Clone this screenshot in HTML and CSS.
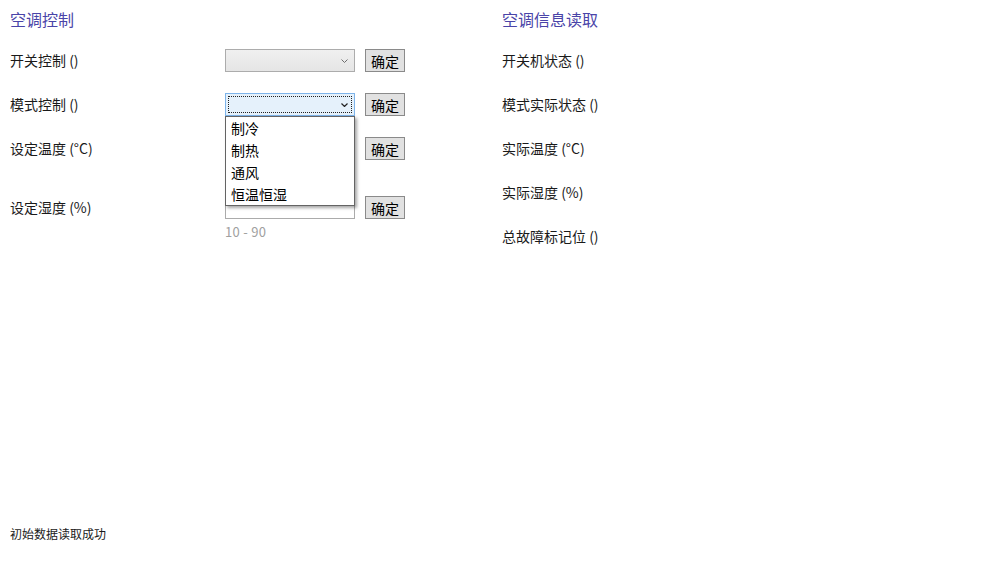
FILE: index.html
```html
<!DOCTYPE html>
<html lang="zh-CN">
<head>
    <meta charset="UTF-8">
    <meta name="viewport" content="width=device-width, initial-scale=1.0">
    <title>空调控制</title>
    <link rel="stylesheet" href="styles.css">
</head>
<body>

    <div class="panels">
        <div class="panel panel-control">
            <h2 class="title">空调控制</h2>

            <div class="row">
                <label class="row-label">开关控制 ()</label>
                <div class="field">
                    <div class="select">
                        <svg class="chevron" width="7" height="4" viewBox="0 0 7 4"><path d="M0.5 0.5 L3.5 3.5 L6.5 0.5" fill="none" stroke="#6d6d6d" stroke-width="1"/></svg>
                    </div>
                </div>
                <button class="btn">确定</button>
            </div>

            <div class="row">
                <label class="row-label">模式控制 ()</label>
                <div class="field">
                    <div class="select open">
                        <span class="focus-ring"></span>
                        <svg class="chevron" width="7" height="4" viewBox="0 0 7 4"><path d="M0.5 0.5 L3.5 3.5 L6.5 0.5" fill="none" stroke="#222" stroke-width="1.2"/></svg>
                        <ul class="dropdown">
                            <li>制冷</li>
                            <li>制热</li>
                            <li>通风</li>
                            <li>恒温恒湿</li>
                        </ul>
                    </div>
                </div>
                <button class="btn">确定</button>
            </div>

            <!-- temperature field sits under the open dropdown -->
            <div class="row">
                <label class="row-label">设定温度 (°C)</label>
                <div class="field">
                    <input type="text" class="text-input">
                    <div class="hint covered">16 - 30</div>
                </div>
                <button class="btn">确定</button>
            </div>

            <div class="row">
                <label class="row-label">设定湿度 (%)</label>
                <div class="field">
                    <input type="text" class="text-input">
                    <div class="hint">10 - 90</div>
                </div>
                <button class="btn">确定</button>
            </div>
        </div>

        <div class="panel panel-info">
            <h2 class="title">空调信息读取</h2>
            <div class="info">开关机状态 ()</div>
            <div class="info">模式实际状态 ()</div>
            <div class="info">实际温度 (°C)</div>
            <div class="info">实际湿度 (%)</div>
            <div class="info">总故障标记位 ()</div>
        </div>
    </div>

    <div class="status">初始数据读取成功</div>

</body>
</html>
```

FILE: styles.css
```css
body {
    font-family: "Noto Sans CJK SC", "Noto Sans", sans-serif;
    font-size: 14px;
    color: #1a1a1a;
    background-color: white;
    margin: 0;
    padding: 10px 10px 19px 10px;
    height: 100vh;
    box-sizing: border-box;
    display: flex;
    flex-direction: column;
}
.panels {
    display: flex;
}
.panel-control {
    width: 492px;
}
.title {
    font-size: 16px;
    font-weight: normal;
    color: #4a44a8;
    line-height: 20px;
    margin: -1px 0 20px 0;
}
.row {
    display: flex;
    align-items: flex-start;
    margin-bottom: 21px;
}
.row-label {
    width: 215px;
    line-height: 23px;
}
.field {
    width: 130px;
    margin-right: 10px;
}
.select {
    position: relative;
    height: 23px;
    border: 1px solid #acacac;
    background: linear-gradient(#f0f0f0, #e5e5e5);
    box-sizing: border-box;
    display: flex;
    align-items: center;
    justify-content: flex-end;
    padding-right: 6px;
}
.select.open {
    border-color: #7eb4ea;
    background: #e5f1fb;
}
.focus-ring {
    position: absolute;
    top: 2px;
    left: 2px;
    right: 2px;
    bottom: 2px;
    border: 1px dotted #222;
}
.dropdown {
    position: absolute;
    top: 22px;
    left: -1px;
    width: 130px;
    box-sizing: border-box;
    margin: 0;
    padding: 0;
    list-style: none;
    background: white;
    border: 1px solid #646464;
    box-shadow: 2px 2px 3px rgba(0, 0, 0, 0.35);
    z-index: 2;
}
.dropdown li {
    line-height: 22px;
    padding-left: 5px;
    color: #000;
}
.text-input {
    display: block;
    width: 130px;
    height: 23px;
    box-sizing: border-box;
    border: 1px solid #ababab;
    margin: 0;
    padding: 0 4px;
    font-family: inherit;
}
.hint {
    font-size: 13px;
    color: #a0a0a0;
    line-height: 16px;
    margin-top: 5px;
    margin-bottom: -6px;
    letter-spacing: 0.3px;
}
.hint.covered {
    visibility: hidden;
}
.btn {
    width: 40px;
    height: 23px;
    padding: 0;
    background-color: #e1e1e1;
    border: 1px solid #8a8a8a;
    font-family: inherit;
    font-size: 14px;
    color: #000;
    line-height: 20px;
}
.info {
    line-height: 23px;
    margin-bottom: 21px;
}
.status {
    margin-top: auto;
    font-size: 12px;
    line-height: 16px;
}
```
